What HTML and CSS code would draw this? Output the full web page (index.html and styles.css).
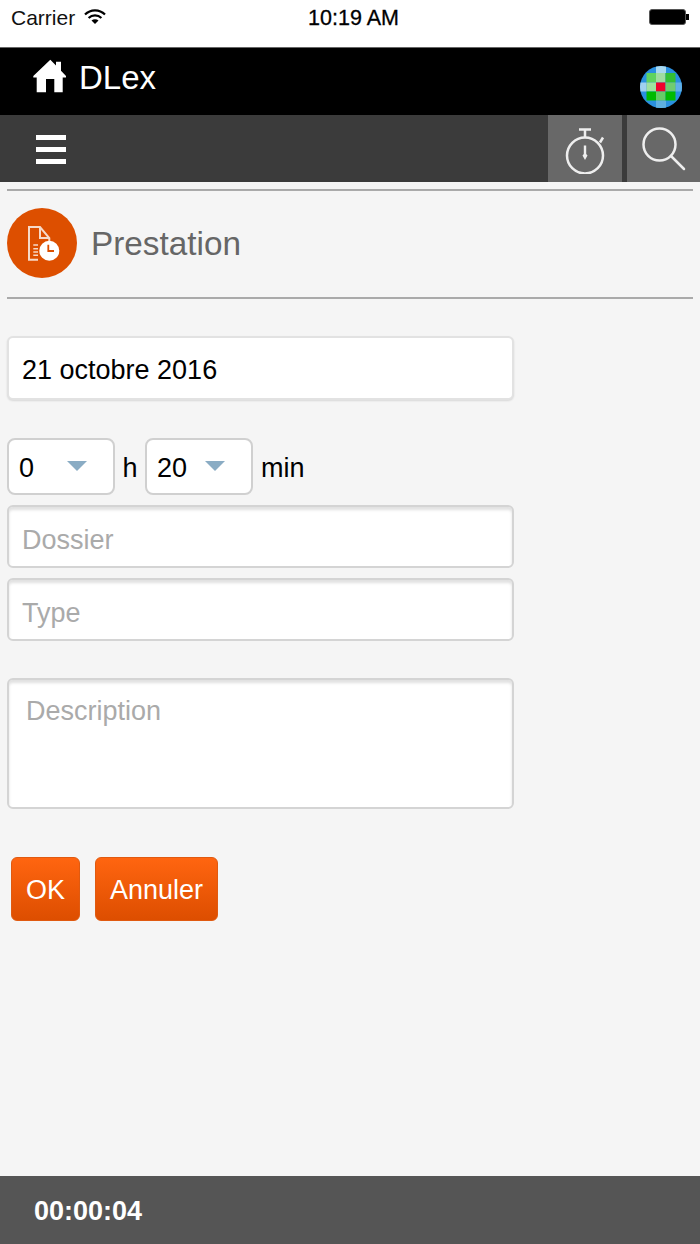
FILE: index.html
```html
<!DOCTYPE html>
<html lang="fr">
  <head>
    <meta charset="UTF-8" />
    <meta name="viewport" content="width=device-width, initial-scale=1.0" />
    <title>DLex - Prestation</title>
    <link rel="stylesheet" href="styles.css">
  </head>
  <body>
    <!-- Status bar -->
    <div class="status-bar">
      <div class="status-left">
        <span>Carrier</span>
        <svg class="wifi" width="22" height="16" viewBox="0 0 22 16">
          <path d="M1 5.5a14 14 0 0 1 20 0" fill="none" stroke="#000" stroke-width="2.2" />
          <path d="M4.6 9a9 9 0 0 1 12.8 0" fill="none" stroke="#000" stroke-width="2.2" />
          <path d="M7.5 11.6a5 5 0 0 1 7 0L11 15z" fill="#000" />
        </svg>
      </div>
      <div class="status-time">10:19 AM</div>
      <div class="battery"><div class="battery-fill"></div><div class="battery-tip"></div></div>
    </div>

    <!-- Header -->
    <div class="header">
      <div class="brand">
        <svg class="home" width="34" height="34" viewBox="0 0 34 34">
          <path d="M17.3 .7 23 6.600V2.700H28V11.700L33 17V18.500H29.700V33.300H21.300V20H13V33.300H3.700V18.500H.3V17Z" fill="#fff" />
        </svg>
        <span>DLex</span>
      </div>
      <div class="logo">
        <svg width="42" height="42" viewBox="0 0 42 42">
          <defs><clipPath id="logoClip"><circle cx="21" cy="21" r="21" /></clipPath></defs>
          <g clip-path="url(#logoClip)">
            <rect width="42" height="42" fill="#2a90e0" />
            <rect x="16" y="0" width="10" height="7" fill="#a8d8f0" />
            <rect x="0" y="16.500" width="6.500" height="9" fill="#a0d0f0" />
            <rect x="35.500" y="16.500" width="6.500" height="9" fill="#60b0e8" />
            <rect x="16" y="34.500" width="10" height="7.500" fill="#60b0e0" />
            <rect x="6.500" y="7" width="9.500" height="9.500" fill="#5fd35f" />
            <rect x="16" y="7" width="9.500" height="9.500" fill="#a0dca0" />
            <rect x="25.500" y="7" width="10" height="9.500" fill="#33c033" />
            <rect x="6.500" y="16.500" width="9.500" height="9" fill="#a0e0a0" />
            <rect x="16" y="16.500" width="9.500" height="9" fill="#f0002c" />
            <rect x="25.500" y="16.500" width="10" height="9" fill="#70cc70" />
            <rect x="6.500" y="25.500" width="9.500" height="9" fill="#00bb00" />
            <rect x="16" y="25.500" width="9.500" height="9" fill="#66cc66" />
            <rect x="25.500" y="25.500" width="10" height="9" fill="#00bb00" />
          </g>
        </svg>
      </div>
    </div>

    <!-- Nav -->
    <div class="nav">
      <div class="burger"><span></span><span></span><span></span></div>
      <div class="nav-actions">
        <div class="nav-btn timer-btn">
          <svg width="44" height="50" viewBox="0 0 44 50">
            <g fill="none" stroke="#eee" stroke-width="2.500">
              <circle cx="22" cy="31.500" r="18" />
              <path d="M16 5.500H28M22 5.500V13.500M37 18.500 40 13.500" />
            </g>
            <path d="M20.800 21.500H23.200V30L24.500 31.500 22 36 19.500 31.500 20.800 30Z" fill="#eee" />
          </svg>
        </div>
        <div class="nav-btn search-btn">
          <svg width="46" height="50" viewBox="0 0 46 50">
            <g fill="none" stroke="#eee" stroke-width="2.500">
              <circle cx="18.500" cy="20.500" r="16" />
              <path d="M30 32 43 45" stroke-linecap="round" />
            </g>
          </svg>
        </div>
      </div>
    </div>

    <!-- Page content -->
    <div class="content">
      <div class="page-title">
        <div class="title-icon">
          <svg width="36" height="40" viewBox="0 0 36 40">
            <path d="M25.300 20V15L16 4H5V36.700H14" fill="none" stroke="#f6d9c8" stroke-width="2" />
            <path d="M16 4V15H25.300" fill="none" stroke="#f6d9c8" stroke-width="2" />
            <path d="M9.300 22H14M9.300 25.700H14M9.300 29H14M9.300 32.300H14" stroke="#f6d9c8" stroke-width="1.500" />
            <circle cx="25.300" cy="27.700" r="10" fill="#fff" />
            <path d="M24.300 21.700V28H30" fill="none" stroke="#dd4f00" stroke-width="1.800" />
          </svg>
        </div>
        <h1>Prestation</h1>
      </div>

      <div class="form">
        <div class="field date-field">21 octobre 2016</div>

        <div class="duration">
          <div class="select"><span>0</span><i class="arrow"></i></div>
          <span class="unit-h">h</span>
          <div class="select"><span>20</span><i class="arrow"></i></div>
          <span class="unit-min">min</span>
        </div>

        <div class="field input-field">Dossier</div>
        <div class="field input-field">Type</div>
        <div class="field textarea-field">Description</div>

        <div class="buttons">
          <div class="btn">OK</div>
          <div class="btn">Annuler</div>
        </div>
      </div>
    </div>

    <!-- Timer footer -->
    <div class="footer">00:00:04</div>
  </body>
</html>
```

FILE: styles.css
```css
/* Global Styles */
body {
  font-family: "Liberation Sans", Arial, sans-serif;
  background-color: #f5f5f5;
  margin: 0;
  padding: 0;
  width: 700px;
  height: 1244px;
  display: flex;
  flex-direction: column;
  overflow: hidden;
}

/* Status bar */
.status-bar {
  height: 47px;
  background-color: #fff;
  display: flex;
  justify-content: space-between;
  align-items: flex-start;
  padding: 7px 11px 0 11px;
  box-sizing: border-box;
  position: relative;
  font-size: 21px;
  line-height: 22px;
  color: #111;
}

.status-left {
  display: flex;
  align-items: center;
  gap: 9px;
}

.wifi {
  margin-top: -3px;
}

.status-time {
  position: absolute;
  left: 7px;
  right: 0;
  top: 7px;
  text-align: center;
  font-size: 21.500px;
  color: #000;
  -webkit-text-stroke: 0.3px #000;
}

.battery {
  display: flex;
  align-items: center;
  margin-top: 2px;
}

.battery-fill {
  width: 37px;
  height: 16px;
  box-sizing: border-box;
  background-color: #000;
  border: 1px solid #555;
  border-radius: 3px;
}

.battery-tip {
  width: 3px;
  height: 6px;
  background-color: #000;
}

/* Header */
.header {
  height: 68px;
  background-color: #000;
  border-top: 1px solid #666;
  box-sizing: border-box;
  display: flex;
  justify-content: space-between;
  padding: 0 18px 0 33px;
}

.brand {
  display: flex;
  align-items: center;
  gap: 12px;
  height: 60px;
  color: #fff;
  font-size: 33px;
}

.home {
  margin-top: -4px;
}

.logo {
  padding-top: 18px;
}

.logo svg {
  display: block;
  filter: blur(0.5px);
}

/* Nav */
.nav {
  height: 67px;
  background-color: #3b3b3b;
  display: flex;
  justify-content: space-between;
  padding-left: 36px;
}

.burger {
  display: flex;
  flex-direction: column;
  justify-content: center;
  gap: 6.500px;
  width: 30px;
  padding-top: 2px;
}

.burger span {
  height: 5.500px;
  background-color: #fff;
}

.nav-actions {
  display: flex;
  gap: 5px;
}

.nav-btn {
  background-color: #686868;
  display: flex;
  align-items: center;
  justify-content: center;
}

.timer-btn {
  width: 74px;
}

.search-btn {
  width: 73px;
}

/* Page content */
.content {
  flex: 1;
  padding: 7px 7px 0;
}

.page-title {
  border-top: 2px solid #aaa;
  border-bottom: 2px solid #aaa;
  height: 103px;
  padding-bottom: 3px;
  display: flex;
  align-items: center;
  gap: 14px;
}

.title-icon {
  width: 70px;
  height: 70px;
  border-radius: 50%;
  background-color: #dd4f00;
  display: flex;
  align-items: center;
  justify-content: center;
}

.page-title h1 {
  margin: 0;
  padding-top: 2px;
  font-size: 33.300px;
  font-weight: normal;
  color: #666;
}

/* Form */
.form {
  width: 507px;
  padding-top: 37px;
}

.field {
  background-color: #fff;
  border: 2px solid #d9d9d9;
  border-radius: 6px;
  box-sizing: border-box;
  font-size: 27px;
}

.date-field {
  height: 64px;
  line-height: 64px;
  padding-left: 13px;
  color: #000;
  border-color: #e2e2e2;
  box-shadow: 0 1px 2px rgba(0, 0, 0, 0.12);
}

.duration {
  display: flex;
  align-items: center;
  margin-top: 38px;
  height: 57px;
  font-size: 27px;
  color: #000;
}

.select {
  width: 108px;
  height: 57px;
  box-sizing: border-box;
  background-color: #fff;
  border: 2px solid #d0d0d0;
  border-radius: 8px;
  display: flex;
  align-items: center;
  padding: 3px 0 0 10px;
  position: relative;
}

.arrow {
  position: absolute;
  left: 58px;
  top: 21px;
  width: 0;
  height: 0;
  border-left: 10px solid transparent;
  border-right: 10px solid transparent;
  border-top: 10px solid #8aacc4;
}

.unit-h {
  width: 30px;
  text-align: center;
  padding-top: 3px;
}

.unit-min {
  margin-left: 8px;
  padding-top: 3px;
}

.input-field {
  height: 63px;
  line-height: 66px;
  padding-left: 13px;
  color: #aaa;
  margin-top: 10px;
  border-color: #d4d4d4;
  box-shadow: inset 0 3px 3px rgba(0, 0, 0, 0.12);
}

.textarea-field {
  height: 131px;
  margin-top: 37px;
  padding: 15px 0 0 17px;
  line-height: 32px;
  color: #aaa;
  border-color: #d4d4d4;
  box-shadow: inset 0 3px 3px rgba(0, 0, 0, 0.12);
}

/* Buttons */
.buttons {
  display: flex;
  gap: 15px;
  margin-top: 48px;
  padding-left: 4px;
}

.btn {
  height: 64px;
  line-height: 64px;
  box-sizing: border-box;
  padding: 0 14px;
  font-size: 27px;
  color: #fff;
  border: 1px solid #e05a10;
  border-radius: 6px;
  background: linear-gradient(#ff6510, #dd4e00);
}

/* Timer footer */
.footer {
  height: 68px;
  line-height: 70px;
  background-color: #555;
  color: #fff;
  font-size: 27px;
  font-weight: bold;
  padding-left: 34px;
}
```
